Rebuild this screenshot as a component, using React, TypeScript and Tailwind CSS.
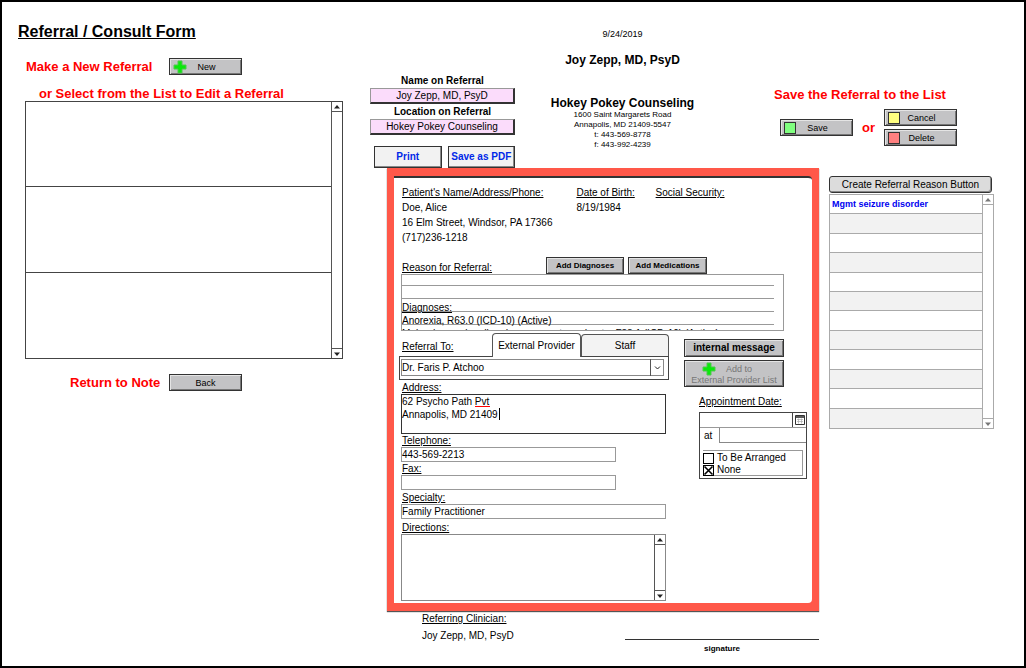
import { FC, ReactNode, useState } from 'react';
import clsx from 'clsx';

const grayButton =
  'border border-[#333] bg-[#c3c3c5] shadow-[inset_1px_1px_0_#e4e4e4,inset_-1px_-1px_0_#777] text-black';

const PlusIcon: FC = () => (
  <svg viewBox="0 0 14 14" className="w-[14px] h-[14px] flex-shrink-0">
    <path d="M5 1h4v4h4v4H9v4H5V9H1V5h4z" fill="#0be80b" stroke="#4fc84f" strokeWidth="1" />
  </svg>
);

const Arrow: FC<{ down?: boolean; color?: string }> = ({ down, color = '#222' }) => (
  <svg viewBox="0 0 6 4" className="w-[6px] h-[4px]">
    <path d={down ? 'M0 0.5h6L3 4z' : 'M0 3.5h6L3 0z'} fill={color} />
  </svg>
);

const ScrollBar: FC<{ light?: boolean }> = ({ light }) => {
  const line = light ? 'border-[#aaa]' : 'border-[#555]';
  const color = light ? '#777' : '#222';
  return (
    <div className={clsx('w-[11px] flex-shrink-0 flex flex-col justify-between border-l', line)}>
      <button type="button" aria-label="Scroll up" className={clsx('h-[10px] flex items-center justify-center border-b', line)}>
        <Arrow color={color} />
      </button>
      <button type="button" aria-label="Scroll down" className={clsx('h-[10px] flex items-center justify-center border-t', line)}>
        <Arrow down color={color} />
      </button>
    </div>
  );
};

const ActionButton: FC<{ children: ReactNode; icon?: ReactNode }> = ({ children, icon }) => (
  <button type="button" className={clsx(grayButton, 'w-[73px] h-[17px] pl-[3px] pr-[3px] flex items-center text-[9px] leading-[12px]')}>
    <span className="w-[14px] flex items-center">{icon}</span>
    <span className="flex-1 pt-px pr-3 text-center">{children}</span>
  </button>
);

const Swatch: FC<{ className: string }> = ({ className }) => (
  <span className={clsx('w-[12px] h-[12px] border border-[#333]', className)} />
);

const HeaderSelect: FC<{ id: string; label: string; value: string }> = ({ id, label, value }) => (
  <div className="flex flex-col">
    <label htmlFor={id} className="text-center text-[10px] leading-[15px] font-bold">
      {label}
    </label>
    <select
      id={id}
      defaultValue={value}
      className="appearance-none w-full h-[16px] p-0 text-center [text-align-last:center] text-[10px] leading-[13px] bg-[#fbdcfb] border border-[#999] border-r-2 border-b-2 border-r-[#333] border-b-[#333]"
    >
      <option>{value}</option>
    </select>
  </div>
);

const FieldLabel: FC<{ htmlFor: string; children: ReactNode; className?: string }> = ({ htmlFor, children, className }) => (
  <label htmlFor={htmlFor} className={clsx('block text-[10px] leading-[13px] underline', className)}>
    {children}
  </label>
);

const inputBox = 'block h-[15px] border border-[#999] px-0 text-[10px] leading-[13px] outline-none';

const ReferralList: FC = () => (
  <section className="pt-[21px]">
    <h1 className="text-[16px] leading-[18px] font-bold underline">Referral / Consult Form</h1>

    <div className="mt-[17px] pl-2 flex items-center text-[13px] leading-[17px] font-bold text-[#f00]">
      <span className="w-[143px]">Make a New Referral</span>
      <ActionButton icon={<PlusIcon />}>
        <span className="font-normal">New</span>
      </ActionButton>
    </div>

    <h2 className="mt-[11px] pl-[21px] text-[13px] leading-[15px] font-bold text-[#f00]">
      or Select from the List to Edit a Referral
    </h2>
    <div className="ml-[7px] h-[258px] flex border border-[#444]">
      <ul className="flex-1 grid grid-rows-3 divide-y divide-[#444]">
        <li />
        <li />
        <li />
      </ul>
      <ScrollBar />
    </div>

    <div className="mt-[15px] pl-[52px] flex items-center text-[13px] leading-[17px] font-bold text-[#f00]">
      <span className="w-[99px]">Return to Note</span>
      <button type="button" className={clsx(grayButton, 'w-[73px] h-[17px] text-[9px] leading-[12px] font-normal')}>
        Back
      </button>
    </div>
  </section>
);

const Header: FC = () => (
  <header className="grid grid-cols-[145fr_215fr_264fr]">
    <div className="pt-[71px]">
      <HeaderSelect id="ref-name" label="Name on Referral" value="Joy Zepp, MD, PsyD" />
      <HeaderSelect id="ref-location" label="Location on Referral" value="Hokey Pokey Counseling" />
      <div className="mt-[11px] pl-1 flex gap-[6px] text-[10px] leading-[14px] font-bold text-[#0028e8]">
        <button type="button" className="flex-1 h-[22px] border border-[#333] bg-[#f2f2f2] shadow-[inset_-1px_-1px_0_#888] whitespace-nowrap">
          Print
        </button>
        <button type="button" className="flex-1 h-[22px] border border-[#333] bg-[#f2f2f2] shadow-[inset_-1px_-1px_0_#888] whitespace-nowrap">
          Save as PDF
        </button>
      </div>
    </div>

    <div className="pt-[26px] text-center">
      <p className="text-[9px] leading-[12px]">9/24/2019</p>
      <p className="mt-3 text-[12px] leading-[16px] font-bold">Joy Zepp, MD, PsyD</p>
      <p className="mt-7 text-[12px] leading-[14px] font-bold">Hokey Pokey Counseling</p>
      <address className="not-italic text-[8px] leading-[10px]">
        <p>1600 Saint Margarets Road</p>
        <p>Annapolis, MD 21409-5547</p>
        <p>t: 443-569-8778</p>
        <p>f: 443-992-4239</p>
      </address>
    </div>

    <div className="pt-[84px] pl-[44px]">
      <h2 className="text-[13px] leading-[17px] font-bold text-[#f00] whitespace-nowrap">Save the Referral to the List</h2>
      <div className="mt-[6px] pl-[6px] flex items-center">
        <ActionButton icon={<Swatch className="bg-[#80ff80]" />}>Save</ActionButton>
        <span className="w-[31px] text-center text-[13px] leading-[16px] font-bold text-[#f00]">or</span>
        <div className="flex flex-col gap-[3px]">
          <ActionButton icon={<Swatch className="bg-[#ffff80]" />}>Cancel</ActionButton>
          <ActionButton icon={<Swatch className="bg-[#ff8080]" />}>Delete</ActionButton>
        </div>
      </div>
    </div>
  </header>
);

const PatientInfo: FC = () => (
  <dl className="pl-[3px] pt-[7px] grid grid-cols-[174fr_79fr_156fr] text-[10px] leading-[15px]">
    <div>
      <dt className="underline">Patient's Name/Address/Phone:</dt>
      <dd>Doe, Alice</dd>
      <dd>16 Elm Street, Windsor, PA 17366</dd>
      <dd>(717)236-1218</dd>
    </div>
    <div>
      <dt className="underline">Date of Birth:</dt>
      <dd>8/19/1984</dd>
    </div>
    <div>
      <dt className="underline">Social Security:</dt>
    </div>
  </dl>
);

const ReasonForReferral: FC = () => {
  const line = 'mr-[9px] border-b border-[#999] pt-[3px] h-[13px] leading-[12px] whitespace-nowrap';
  return (
    <section className="mt-3 pl-[2px] pr-[28px]">
      <div className="h-[17px] flex items-end">
        <h3 className="flex-1 pl-px text-[10px] leading-[13px] underline">Reason for Referral:</h3>
        <div className="flex gap-1 pr-[77px] text-[8px] leading-[12px] font-bold">
          <button type="button" className={clsx(grayButton, 'w-[78px] h-[17px]')}>Add Diagnoses</button>
          <button type="button" className={clsx(grayButton, 'w-[79px] h-[17px]')}>Add Medications</button>
        </div>
      </div>
      <div className="h-[57px] overflow-hidden border border-[#999] text-[10px]">
        <div className="mr-[9px] h-[11px] border-b border-[#999]" />
        <div className={line} />
        <div className={clsx(line, 'underline')}>Diagnoses:</div>
        <div className={line}>Anorexia, R63.0 (ICD-10) (Active)</div>
        <div className={line}>Major depressive disorder, recurrent, moderate, F33.1 (ICD-10) (Active)</div>
      </div>
    </section>
  );
};

const ProviderFields: FC = () => {
  const [tab, setTab] = useState<'external' | 'staff'>('external');
  const tabClass = (active: boolean) =>
    clsx(
      'border border-[#555] rounded-t-[4px] text-[10px] leading-[14px]',
      active ? 'relative z-10 -mb-px h-[24px] border-b-0 bg-white' : 'h-[22px] border-b-0 bg-[#f3f3f3]'
    );

  return (
    <div className="w-[270px]">
      <div className="h-[23px] flex items-end">
        <span className="flex-1 self-center pt-1 pl-[3px] text-[10px] leading-[14px] underline">Referral To:</span>
        <div role="tablist" className="flex items-end">
          <button type="button" role="tab" aria-selected={tab === 'external'} onClick={() => setTab('external')} className={clsx(tabClass(tab === 'external'), 'w-[89px]')}>
            External Provider
          </button>
          <button type="button" role="tab" aria-selected={tab === 'staff'} onClick={() => setTab('staff')} className={clsx(tabClass(tab === 'staff'), 'w-[88px]')}>
            Staff
          </button>
        </div>
      </div>
      <div className="h-[24px] p-[2px] pl-px border border-[#444]">
        <div className="relative mr-[2px]">
          <select aria-label="Referral To" className="appearance-none block w-full h-[17px] p-0 border border-[#888] text-[10px] leading-[15px]">
            <option>Dr. Faris P. Atchoo</option>
          </select>
          <span className="pointer-events-none absolute right-0 top-0 h-[17px] w-[14px] border-l border-[#555] flex items-center justify-center">
            <svg viewBox="0 0 7 4" className="w-[7px] h-[4px]">
              <path d="M1 0.5L3.5 3L6 0.5" fill="none" stroke="#222" />
            </svg>
          </span>
        </div>
      </div>

      <div className="pl-[2px] pr-[3px]">
        <FieldLabel htmlFor="address" className="mt-px pl-px">Address:</FieldLabel>
        <div className="relative">
          <textarea
            id="address"
            spellCheck={false}
            defaultValue={'62 Psycho Path Pvt\nAnnapolis, MD 21409'}
            className="block w-full h-[40px] p-0 border border-[#333] text-[10px] leading-[13px] resize-none outline-none"
          />
          {/* spelling mark and caret */}
          <span className="absolute left-[74px] top-[12px] w-[15px] h-px bg-[#f00]" />
          <span className="absolute left-[98px] top-[14px] w-px h-[12px] bg-black" />
        </div>
        <FieldLabel htmlFor="telephone" className="pl-px">Telephone:</FieldLabel>
        <input id="telephone" defaultValue="443-569-2213" className={clsx(inputBox, 'w-[215px]')} />
        <FieldLabel htmlFor="fax" className="pl-px">Fax:</FieldLabel>
        <input id="fax" className={clsx(inputBox, 'w-[215px]')} />
        <FieldLabel htmlFor="specialty" className="mt-px pl-px">Specialty:</FieldLabel>
        <input id="specialty" defaultValue="Family Practitioner" className={clsx(inputBox, 'w-full')} />
        <FieldLabel htmlFor="directions" className="mt-[2px] pl-px">Directions:</FieldLabel>
        <div className="flex border border-[#888]">
          <textarea id="directions" className="block flex-1 h-[65px] p-0 text-[10px] leading-[13px] resize-none outline-none" />
          <ScrollBar />
        </div>
      </div>
    </div>
  );
};

const CheckOption: FC<{ label: string; defaultChecked?: boolean }> = ({ label, defaultChecked }) => (
  <label className="flex items-center gap-[3px] h-[12px] text-[10px] leading-[12px] whitespace-nowrap">
    <span className="relative w-[11px] h-[11px]">
      <input type="checkbox" defaultChecked={defaultChecked} className="peer appearance-none block w-[11px] h-[11px] border border-black" />
      <svg viewBox="0 0 11 11" className="pointer-events-none absolute inset-0 w-[11px] h-[11px] hidden peer-checked:block">
        <path d="M1.5 1.5l8 8M9.5 1.5l-8 8" stroke="#000" strokeWidth="1.6" />
      </svg>
    </span>
    {label}
  </label>
);

const Appointment: FC = () => (
  <div className="ml-[15px] w-[123px] pt-[6px]">
    <button type="button" className={clsx(grayButton, 'block w-[100px] h-[18px] text-[10px] leading-[14px] font-bold')}>
      internal message
    </button>
    <button type="button" disabled className={clsx(grayButton, 'mt-[3px] w-[100px] h-[27px] flex flex-col items-center justify-center text-[9px] leading-[10px] whitespace-nowrap')}>
      <span className="flex items-center gap-[10px] h-[13px] pr-[14px] text-[#777]">
        <PlusIcon />
        Add to
      </span>
      <span className="text-[#777]">External Provider List</span>
    </button>

    <label htmlFor="appt-date" className="block mt-2 pl-[15px] text-[10px] leading-[14px] underline">
      Appointment Date:
    </label>
    <div className="mt-[3px] ml-[15px] h-[67px] border border-[#444] text-[10px]">
      <div className="flex h-[15px] border-b border-[#999]">
        <input id="appt-date" className="flex-1 min-w-0 outline-none" />
        <button type="button" aria-label="Open calendar" className="w-[14px] border-l border-[#444] flex items-center justify-center">
          <svg viewBox="0 0 10 10" className="w-[10px] h-[10px]">
            <path d="M0.5 0.5h9v9h-9z" fill="#fff" stroke="#333" />
            <path d="M1 2h8" stroke="#333" strokeWidth="1.6" />
            <path d="M2 4.5h6M2 6.5h6M3.5 3.5v5M6.5 3.5v5" stroke="#aaa" strokeWidth="0.7" />
          </svg>
        </button>
      </div>
      <div className="flex h-[15px]">
        <label htmlFor="appt-time" className="w-[19px] pl-1 leading-[16px]">at</label>
        <input id="appt-time" className="flex-1 min-w-0 border-l border-b border-[#888] outline-none" />
      </div>
      <div className="mt-[7px] mx-[3px] h-[26px] pt-px border border-[#999] border-l-0">
        <CheckOption label="To Be Arranged" />
        <CheckOption label="None" defaultChecked />
      </div>
    </div>
  </div>
);

const ReferralForm: FC = () => (
  <div className="px-[7px] py-2 bg-[#ff5849] shadow-[0_1px_1px_#555]">
    <div className="h-full pl-[5px] pb-[2px] bg-white border-t-2 border-[#333] rounded-r-[4px]">
      <PatientInfo />
      <ReasonForReferral />
      <div className="mt-[2px] flex">
        <ProviderFields />
        <Appointment />
      </div>
    </div>
  </div>
);

const ReasonList: FC = () => {
  const reasons = ['Mgmt seizure disorder', '', '', '', '', '', '', '', '', '', '', ''];
  return (
    <aside className="pt-2">
      <button
        type="button"
        className="block w-[163px] h-[17px] rounded-[3px] border border-[#333] bg-[#dcdcdc] shadow-[inset_-1px_-1px_0_#888] text-[10px] leading-[14px] whitespace-nowrap"
      >
        Create Referral Reason Button
      </button>
      <div className="mt-px h-[235px] flex border border-[#aaa]">
        <ul className="flex-1 grid grid-rows-12 divide-y divide-[#aaa]">
          {reasons.map((reason, i) => (
            <li key={i} className={clsx('pl-[2px] text-[9px] leading-[18px] font-bold text-[#0000f0] min-h-0', i % 2 === 1 && 'bg-[#f2f2f2]')}>
              {reason}
            </li>
          ))}
        </ul>
        <ScrollBar light />
      </div>
    </aside>
  );
};

const SignatureRow: FC = () => (
  <footer className="pl-[35px] flex justify-between text-[10px]">
    <div>
      <p className="leading-[15px] underline">Referring Clinician:</p>
      <p className="mt-[2px] leading-[15px]">Joy Zepp, MD, PsyD</p>
    </div>
    <div className="w-[194px] pt-7">
      <p className="border-t border-[#333] pt-1 text-center text-[8px] leading-[10px] font-bold">signature</p>
    </div>
  </footer>
);

const App: FC = () => (
  <main className="min-h-screen border-2 border-black bg-white pl-4 pr-[30px] grid grid-cols-[325fr_624fr] gap-x-[27px] content-start font-['Liberation_Sans',Arial,sans-serif] text-black">
    <ReferralList />
    <div>
      <Header />
      <div className="pl-[17px] grid grid-cols-[432fr_165fr] gap-x-[10px]">
        <ReferralForm />
        <ReasonList />
        <SignatureRow />
      </div>
    </div>
  </main>
);

export default App;
